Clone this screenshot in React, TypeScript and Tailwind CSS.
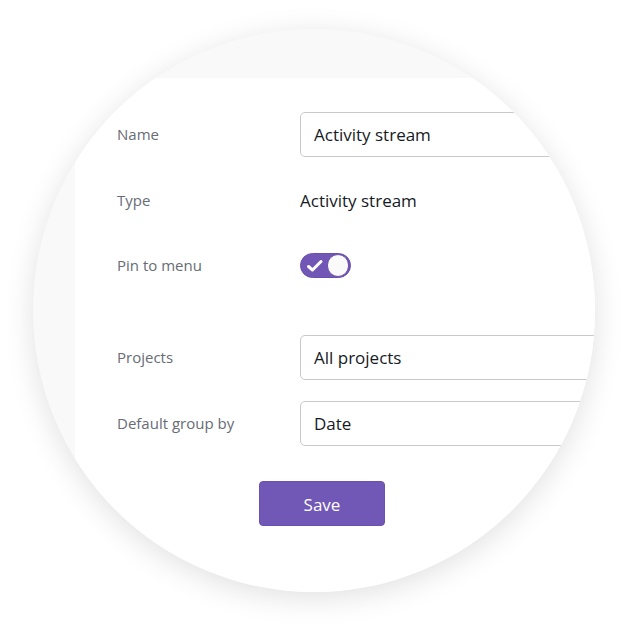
import React from "react";

const font = { fontFamily: '"Open Sans", "Liberation Sans", sans-serif' };

function Row({ label, children, className = "" }: { label: string; children: React.ReactNode; className?: string }) {
  return (
    <div className={`flex items-center h-[45px] ${className}`}>
      <div className="w-[183px] shrink-0 text-[15px] text-[#676c75]">{label}</div>
      {children}
    </div>
  );
}

function Field({ value }: { value: string }) {
  return (
    <div className="w-[340px] h-[45px] shrink-0 flex items-center pl-[13px] border border-[#c9c9cc] rounded-[5px] bg-white text-[17px] text-[#161a25]">
      {value}
    </div>
  );
}

function Toggle() {
  return (
    <div className="relative w-[51px] h-[25px] rounded-full bg-[#7256b5] border border-[#6a4fae]">
      <svg className="absolute left-[5px] top-[5px]" width="18" height="14" viewBox="0 0 18 14" fill="none">
        <path d="M2.5 7.5 L6.5 11 L15 2.5" stroke="white" strokeWidth="3" strokeLinecap="round" strokeLinejoin="round" />
      </svg>
      <div className="absolute right-[1px] top-[0px] w-[22px] h-[23px] rounded-full bg-[#fafafa] border border-[#6a4fae]" />
    </div>
  );
}

export default function App() {
  return (
    <div className="w-[627px] h-[627px] bg-white pl-[33px] pt-[29px]" style={font}>
      <div className="w-[562px] h-[563px] rounded-full overflow-hidden bg-[#f9f9fa] shadow-[0_6px_30px_rgba(0,0,0,0.12)] pl-[42px] pt-[49px]">
        <div className="w-[600px] h-[600px] bg-white pl-[42px] pt-[34px]">
          <Row label="Name">
            <Field value="Activity stream" />
          </Row>
          <Row label="Type" className="mt-[21px]">
            <span className="text-[17px] text-[#161a25]">Activity stream</span>
          </Row>
          <Row label="Pin to menu" className="mt-[20px]">
            <Toggle />
          </Row>
          <Row label="Projects" className="mt-[47px]">
            <Field value="All projects" />
          </Row>
          <Row label="Default group by" className="mt-[21px]">
            <Field value="Date" />
          </Row>
          <button className="mt-[35px] ml-[142px] w-[126px] h-[45px] pt-[3px] rounded-[4px] bg-[#7158b6] border border-[#6a50b0] text-white text-[17px]">
            Save
          </button>
        </div>
      </div>
    </div>
  );
}
